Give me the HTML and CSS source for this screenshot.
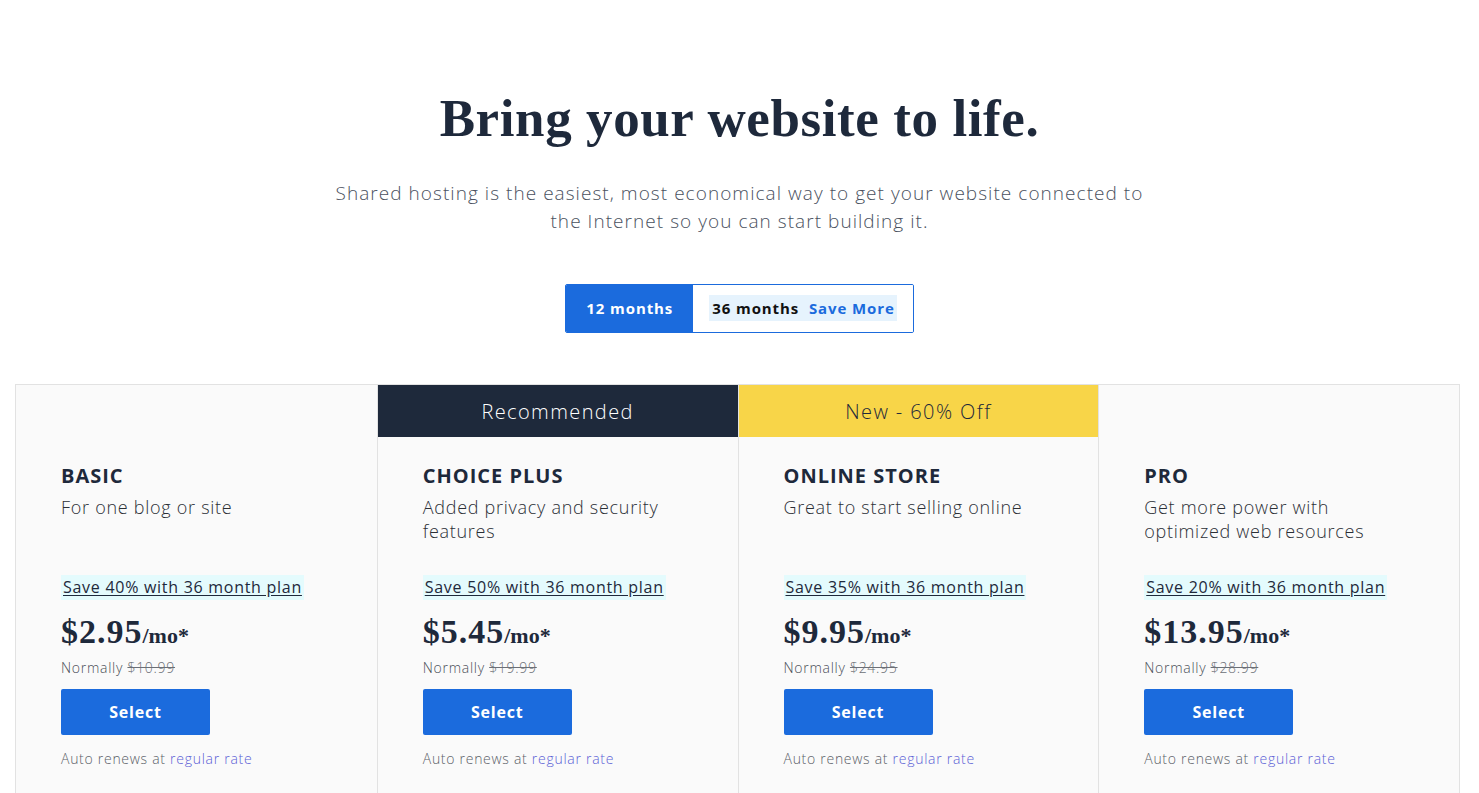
FILE: index.html
```html
<html lang="en">
<head>
  <meta charset="UTF-8" />
  <meta name="viewport" content="width=device-width, initial-scale=1.0" />
  <title>Shared Hosting Plans</title>
  <link rel="stylesheet" href="styles.css">
</head>
<body>

  <!-- Hero -->
  <section class="hero">
    <h1 class="hero-title">Bring your website to life.</h1>
    <p class="hero-sub">Shared hosting is the easiest, most economical way to get your website connected to the Internet so you can start building it.</p>

    <div class="term-toggle">
      <button class="term active">12 months</button>
      <button class="term">
        <span class="term-label">36 months <span class="save-more">Save More</span></span>
      </button>
    </div>
  </section>

  <!-- Plans -->
  <section class="plans">
    <div class="plan">
      <div class="plan-banner"></div>
      <div class="plan-body">
        <h2 class="plan-name">BASIC</h2>
        <p class="plan-desc">For one blog or site</p>
        <a class="plan-save" href="#">Save 40% with 36 month plan</a>
        <div class="plan-price">$2.95<span class="per">/mo*</span></div>
        <div class="plan-normal">Normally <s>$10.99</s></div>
        <button class="btn-select">Select</button>
        <div class="plan-renew">Auto renews at <a href="#">regular rate</a></div>
      </div>
    </div>

    <div class="plan">
      <div class="plan-banner dark">Recommended</div>
      <div class="plan-body">
        <h2 class="plan-name">CHOICE PLUS</h2>
        <p class="plan-desc">Added privacy and security features</p>
        <a class="plan-save" href="#">Save 50% with 36 month plan</a>
        <div class="plan-price">$5.45<span class="per">/mo*</span></div>
        <div class="plan-normal">Normally <s>$19.99</s></div>
        <button class="btn-select">Select</button>
        <div class="plan-renew">Auto renews at <a href="#">regular rate</a></div>
      </div>
    </div>

    <div class="plan">
      <div class="plan-banner yellow">New - 60% Off</div>
      <div class="plan-body">
        <h2 class="plan-name">ONLINE STORE</h2>
        <p class="plan-desc">Great to start selling online</p>
        <a class="plan-save" href="#">Save 35% with 36 month plan</a>
        <div class="plan-price">$9.95<span class="per">/mo*</span></div>
        <div class="plan-normal">Normally <s>$24.95</s></div>
        <button class="btn-select">Select</button>
        <div class="plan-renew">Auto renews at <a href="#">regular rate</a></div>
      </div>
    </div>

    <div class="plan">
      <div class="plan-banner"></div>
      <div class="plan-body">
        <h2 class="plan-name">PRO</h2>
        <p class="plan-desc">Get more power with optimized web resources</p>
        <a class="plan-save" href="#">Save 20% with 36 month plan</a>
        <div class="plan-price">$13.95<span class="per">/mo*</span></div>
        <div class="plan-normal">Normally <s>$28.99</s></div>
        <button class="btn-select">Select</button>
        <div class="plan-renew">Auto renews at <a href="#">regular rate</a></div>
      </div>
    </div>
  </section>

</body>
</html>
```

FILE: styles.css
```css
* {
  margin: 0;
  padding: 0;
  box-sizing: border-box;
}

body {
  background: #fff;
  font-family: "Open Sans", sans-serif;
  letter-spacing: 0.045em;
  color: #1e293b;
  height: 100vh;
  overflow: hidden;
}

/* Hero */
.hero {
  display: flex;
  flex-direction: column;
  align-items: center;
  padding-top: 88px;
}

.hero-title {
  font-family: "Liberation Serif", serif;
  font-weight: bold;
  font-size: 53px;
  line-height: 60px;
  letter-spacing: 0.6px;
  color: #1e293b;
}

.hero-sub {
  margin-top: 31px;
  max-width: 812px;
  text-align: center;
  font-size: 19px;
  font-weight: 300;
  line-height: 28px;
  letter-spacing: 0.055em;
  color: #4a5160;
}

.term-toggle {
  display: flex;
  margin-top: 49px;
  height: 49px;
  border: 1px solid #1b6bdd;
  border-radius: 2px;
  overflow: hidden;
}

.term {
  border: none;
  background: #fff;
  font-family: inherit;
  font-size: 15px;
  font-weight: 700;
  letter-spacing: 0.06em;
  color: #111;
  padding: 0 16px 2px 16px;
  cursor: pointer;
}

.term.active {
  background: #1b6bdd;
  color: #fff;
  width: 127px;
  padding: 0 0 2px 0;
}

.term-label {
  display: inline-block;
  background: #e6f3fd;
  padding: 3px 2px 3px 3px;
}

.save-more {
  color: #1b6bdd;
  margin-left: 5px;
}

/* Plans */
.plans {
  display: grid;
  grid-template-columns: repeat(4, 1fr);
  margin: 51px 19px 0 15px;
  border: 1px solid #e2e2e2;
  border-bottom: none;
}

.plan {
  background: #fafafa;
  border-left: 1px solid #e2e2e2;
  height: 420px;
}

.plan:first-child {
  border-left: none;
}

.plan-banner {
  height: 52px;
  display: flex;
  align-items: center;
  justify-content: center;
  font-size: 20px;
  font-weight: 300;
  letter-spacing: 0.07em;
}

.plan-banner.dark {
  background: #1e293b;
  color: #fff;
}

.plan-banner.yellow {
  background: #f8d548;
  color: #1e293b;
}

.plan-body {
  display: flex;
  flex-direction: column;
  align-items: flex-start;
  padding: 27px 40px 0 45px;
}

.plan-name {
  font-size: 20px;
  line-height: 24px;
  font-weight: 700;
  letter-spacing: 0.05em;
  color: #1e293b;
}

.plan-desc {
  margin-top: 7px;
  height: 48px;
  font-size: 18px;
  font-weight: 300;
  line-height: 24px;
  color: #2b2f36;
  max-width: 252px;
}

.plan-save {
  margin-top: 32px;
  background: #e4fbfd;
  padding: 0 2px;
  line-height: 25px;
  font-size: 16px;
  font-weight: 500;
  color: #1e293b;
  text-decoration: underline;
  text-underline-offset: 2px;
}

.plan-price {
  margin-top: 14px;
  font-family: "Liberation Serif", serif;
  font-weight: bold;
  font-size: 34px;
  line-height: 36px;
  letter-spacing: 1px;
  color: #1e293b;
}

.plan-price .per {
  font-size: 22px;
  letter-spacing: 0;
}

.plan-normal {
  margin-top: 4px;
  font-size: 14px;
  line-height: 20px;
  font-weight: 300;
  color: #4a4f58;
}

.plan-normal s {
  color: #6b6f76;
}

.btn-select {
  margin-top: 11px;
  width: 149px;
  height: 46px;
  border: none;
  border-radius: 2px;
  background: #1b6bdd;
  color: #fff;
  font-family: inherit;
  font-size: 16px;
  font-weight: 700;
  letter-spacing: 0.05em;
  cursor: pointer;
}

.plan-renew {
  margin-top: 14px;
  font-size: 14px;
  line-height: 20px;
  font-weight: 300;
  color: #5a5f68;
}

.plan-renew a {
  color: #5b5fd6;
  text-decoration: none;
}
```
